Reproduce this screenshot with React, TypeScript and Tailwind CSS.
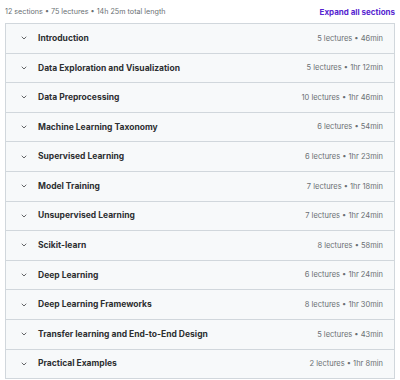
import { ChevronDown } from "lucide-react"

interface Section {
  title: string
  lectures: number
  length: string
}

const SECTIONS: Section[] = [
  { title: "Introduction", lectures: 5, length: "46min" },
  { title: "Data Exploration and Visualization", lectures: 5, length: "1hr 12min" },
  { title: "Data Preprocessing", lectures: 10, length: "1hr 46min" },
  { title: "Machine Learning Taxonomy", lectures: 6, length: "54min" },
  { title: "Supervised Learning", lectures: 6, length: "1hr 23min" },
  { title: "Model Training", lectures: 7, length: "1hr 18min" },
  { title: "Unsupervised Learning", lectures: 7, length: "1hr 24min" },
  { title: "Scikit-learn", lectures: 8, length: "58min" },
  { title: "Deep Learning", lectures: 6, length: "1hr 24min" },
  { title: "Deep Learning Frameworks", lectures: 8, length: "1hr 30min" },
  { title: "Transfer learning and End-to-End Design", lectures: 5, length: "43min" },
  { title: "Practical Examples", lectures: 2, length: "1hr 8min" },
]

const App = () => {
  return (
    <div className="h-[380px] w-[400px] bg-white px-[5px] font-['Inter',sans-serif] text-[#2d2f31]">
      <div className="flex h-[23px] items-center justify-between pt-[1px]">
        <span className="text-[7.2px] text-[#6a6f73]">
          12 sections • 75 lectures • 14h 25m total length
        </span>

        <span className="text-[8px] font-bold text-[#5624d0]">
          Expand all sections
        </span>
      </div>

      <div className="border border-[#d1d7dc]">
        {SECTIONS.map((section, index) => (
          <div
            key={section.title}
            className={`flex h-[28.6px] items-center bg-[#f7f9fa] pl-[14px] pr-[11px] ${
              index > 0 ? "box-content border-t border-[#d1d7dc]" : ""
            }`}
          >
            <ChevronDown size={8} strokeWidth={2.2} className="mr-[10px] text-[#2d2f31]" />

            <span className="flex-1 text-[8.5px] font-bold">{section.title}</span>

            <span className="text-[7.5px] text-[#6a6f73]">
              {section.lectures} lectures • {section.length}
            </span>
          </div>
        ))}
      </div>
    </div>
  )
}

export default App
